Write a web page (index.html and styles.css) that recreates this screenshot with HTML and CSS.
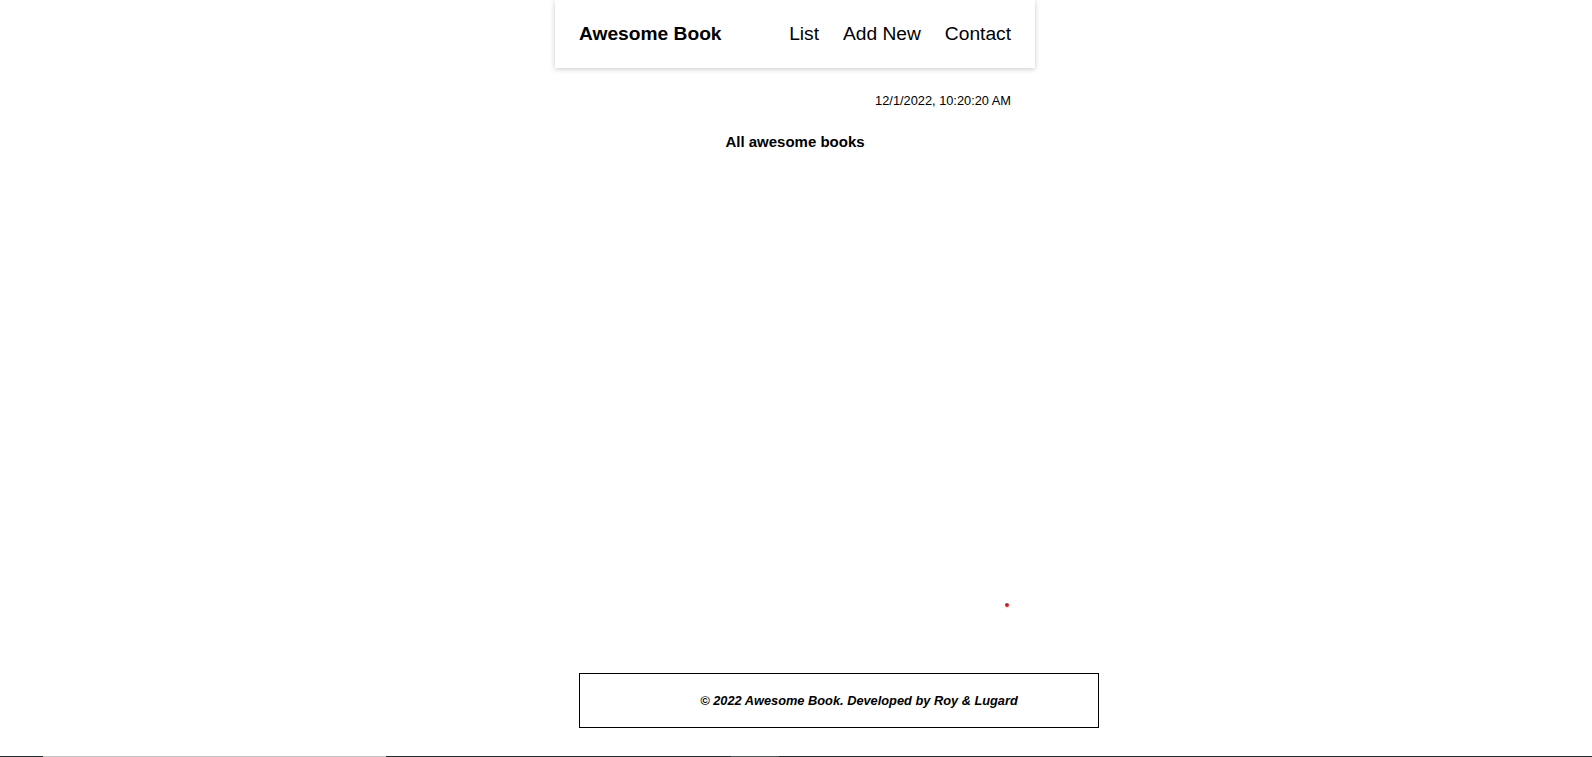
FILE: index.html
```html
<!DOCTYPE html>
<html lang="en">
<head>
<meta charset="utf-8">
<title>Awesome Book</title>
<link rel="stylesheet" href="styles.css">
</head>
<body>
<div class="page">
  <div class="container">
    <nav class="nav">
      <span class="brand">Awesome Book</span>
      <ul class="links">
        <li>List</li>
        <li>Add New</li>
        <li>Contact</li>
      </ul>
    </nav>
    <p class="date">12/1/2022, 10:20:20 AM</p>
    <h1 class="title">All awesome books</h1>
    <div class="books">
      <span class="dot"></span>
    </div>
    <footer class="footer">
      <p>© 2022 Awesome Book. Developed by Roy &amp; Lugard</p>
    </footer>
  </div>
  <div class="strip">
    <span class="seg dark s1"></span>
    <span class="seg grey s2"></span>
    <span class="seg dark s3"></span>
    <span class="seg mid s4"></span>
    <span class="seg dark s5"></span>
  </div>
</div>
</body>
</html>
```
FILE: styles.css
```css
* { box-sizing: border-box; }
html, body { margin: 0; padding: 0; }
body {
  font-family: "Liberation Sans", Arial, sans-serif;
  color: #000;
  background: #fff;
}
.page {
  min-height: 100vh;
  display: flex;
  flex-direction: column;
}
.container {
  width: 480px;
  margin: 0 0 0 calc(50% - 241px);
  display: flex;
  flex-direction: column;
}
.nav {
  height: 68px;
  padding: 0 24px;
  display: flex;
  align-items: center;
  justify-content: space-between;
  background: #fff;
  box-shadow: 0 1px 5px rgba(0, 0, 0, 0.22);
}
.brand {
  font-size: 19.2px;
  font-weight: 700;
}
.links {
  list-style: none;
  margin: 0;
  padding: 0;
  display: flex;
  gap: 24px;
  font-size: 19.2px;
}
.date {
  margin: 25px 0 0;
  padding-right: 24px;
  text-align: right;
  font-size: 12.8px;
  line-height: 15px;
}
.title {
  margin: 25px 0 0;
  text-align: center;
  font-size: 15px;
  line-height: 17px;
  font-weight: 700;
}
.books {
  height: 457px;
  display: flex;
  align-items: flex-end;
  justify-content: flex-end;
  padding-right: 26px;
}
.dot {
  width: 4px;
  height: 4px;
  border-radius: 50%;
  background: #e8131b;
}
.footer {
  margin: 66px 0 0 24px;
  width: 520px;
  height: 55px;
  border: 1px solid #000;
  padding-left: 40px;
  display: flex;
  align-items: center;
  justify-content: center;
}
.footer p {
  margin: 0;
  font-size: 12.8px;
  font-weight: 700;
  font-style: italic;
}
.strip {
  margin-top: auto;
  height: 1px;
  display: flex;
}
.seg { height: 1px; }
.dark { background: #1f2c31; }
.grey { background: #c3c3c3; }
.mid { background: #4a5357; }
.s1 { width: 43px; }
.s2 { width: 343px; }
.s3 { width: 345px; }
.s4 { width: 48px; }
.s5 { flex: 1; }
```
